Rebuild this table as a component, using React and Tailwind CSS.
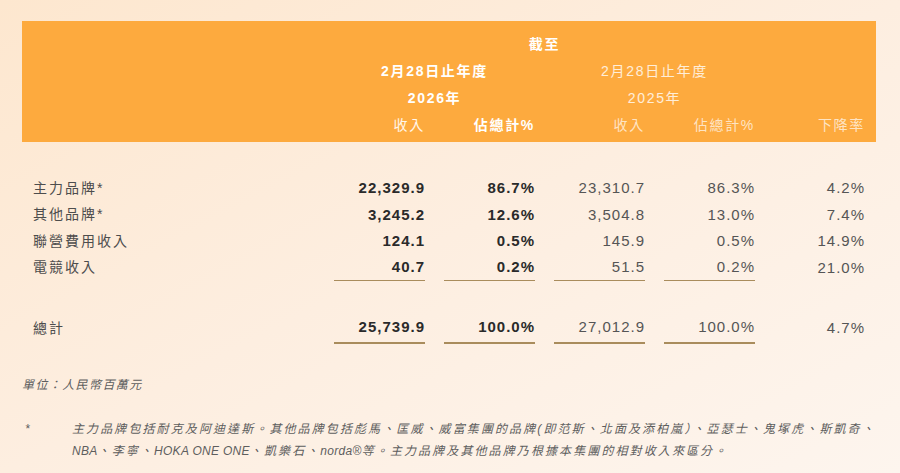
import React from 'react';

const GRID = 'grid grid-cols-[1fr_91px_91px_91px_91px_91px] gap-x-[19px]';

const rows = [
  { label: '主力品牌*', a: '22,329.9', b: '86.7%', c: '23,310.7', d: '86.3%', e: '4.2%' },
  { label: '其他品牌*', a: '3,245.2', b: '12.6%', c: '3,504.8', d: '13.0%', e: '7.4%' },
  { label: '聯營費用收入', a: '124.1', b: '0.5%', c: '145.9', d: '0.5%', e: '14.9%' },
  { label: '電競收入', a: '40.7', b: '0.2%', c: '51.5', d: '0.2%', e: '21.0%' },
];

function Row({ row, last }) {
  const line = last ? 'border-b border-[#a98c5c]' : '';
  return (
    <div className={`${GRID} h-[26.5px] items-stretch`}>
      <div className="flex items-center text-[14px] tracking-[2px] text-[#4d4d4d]">{row.label}</div>
      <div className={`flex items-center justify-end text-[15px] font-bold tracking-[1px] text-[#2a2a2a] ${line}`}>{row.a}</div>
      <div className={`flex items-center justify-end text-[15px] font-bold tracking-[1px] text-[#2a2a2a] ${line}`}>{row.b}</div>
      <div className={`flex items-center justify-end text-[15px] tracking-[1px] text-[#555] ${line}`}>{row.c}</div>
      <div className={`flex items-center justify-end text-[15px] tracking-[1px] text-[#555] ${line}`}>{row.d}</div>
      <div className="flex items-center justify-end text-[15px] tracking-[1px] text-[#555]">{row.e}</div>
    </div>
  );
}

// latin words in the note sit tighter than the chinese text
function Lat({ children }) {
  return <span className="tracking-[0.3px]">{children}</span>;
}

export default function App() {
  return (
    <div
      className="h-[473px] w-full overflow-hidden bg-gradient-to-br from-[#fde7cf] via-[#fdeee0] to-[#fdf5ee] pt-[21px]"
      style={{ fontFamily: '"Liberation Sans", "Noto Sans CJK TC", sans-serif' }}
    >
      {/* header */}
      <div className="ml-[22px] mr-[24px] bg-[#fdaa3e] px-[11px] pt-[10px] pb-[3px] text-[14px] tracking-[1.7px] text-white">
        <div className={`${GRID} h-[27px] items-center`}>
          <div />
          <div className="col-span-4 text-center font-bold">截至</div>
          <div />
        </div>
        <div className={`${GRID} h-[27px] items-center`}>
          <div />
          <div className="col-span-2 text-center font-bold">2月28日止年度</div>
          <div className="col-span-2 text-center text-white/80">2月28日止年度</div>
          <div />
        </div>
        <div className={`${GRID} h-[27px] items-center`}>
          <div />
          <div className="col-span-2 text-center font-bold">2026年</div>
          <div className="col-span-2 text-center text-white/80">2025年</div>
          <div />
        </div>
        <div className={`${GRID} h-[27px] items-center`}>
          <div />
          <div className="text-right text-white/90">收入</div>
          <div className="text-right font-semibold">佔總計%</div>
          <div className="text-right text-white/70">收入</div>
          <div className="text-right text-white/70">佔總計%</div>
          <div className="text-right text-white/70">下降率</div>
        </div>
      </div>

      {/* body */}
      <div className="ml-[22px] mr-[24px] mt-[33px] px-[11px]">
        {rows.map((r, i) => (
          <Row key={r.label} row={r} last={i === rows.length - 1} />
        ))}
        <div className={`${GRID} mt-[31px] h-[32px] items-stretch`}>
          <div className="flex items-center text-[14px] tracking-[2px] text-[#4d4d4d]">總計</div>
          <div className="flex items-center justify-end border-b-2 border-[#a98c5c] text-[15px] font-bold tracking-[1px] text-[#2a2a2a]">25,739.9</div>
          <div className="flex items-center justify-end border-b-2 border-[#a98c5c] text-[15px] font-bold tracking-[1px] text-[#2a2a2a]">100.0%</div>
          <div className="flex items-center justify-end border-b-2 border-[#a98c5c] text-[15px] tracking-[1px] text-[#555]">27,012.9</div>
          <div className="flex items-center justify-end border-b-2 border-[#a98c5c] text-[15px] tracking-[1px] text-[#555]">100.0%</div>
          <div className="flex items-center justify-end text-[15px] tracking-[1px] text-[#555]">4.7%</div>
        </div>
      </div>

      {/* notes */}
      <div className="ml-[22px] mt-[32px] text-[12px] italic leading-[18px] tracking-[1.4px] text-[#5e5e5e]">
        單位：人民幣百萬元
      </div>
      <div className="ml-[22px] mt-[24px] flex text-[12px] italic leading-[22px] tracking-[2.1px] text-[#5e5e5e]">
        <div className="w-[50px] shrink-0 pl-[3px]">*</div>
        <div className="whitespace-nowrap">
          主力品牌包括耐克及阿迪達斯。其他品牌包括彪馬、匡威、威富集團的品牌(即范斯、北面及添柏嵐）、亞瑟士、鬼塚虎、斯凱奇、
          <br />
          <Lat>NBA</Lat>、李寧、<Lat>HOKA ONE ONE</Lat>、凱樂石、<Lat>norda®</Lat>等。主力品牌及其他品牌乃根據本集團的相對收入來區分。
        </div>
      </div>
    </div>
  );
}
